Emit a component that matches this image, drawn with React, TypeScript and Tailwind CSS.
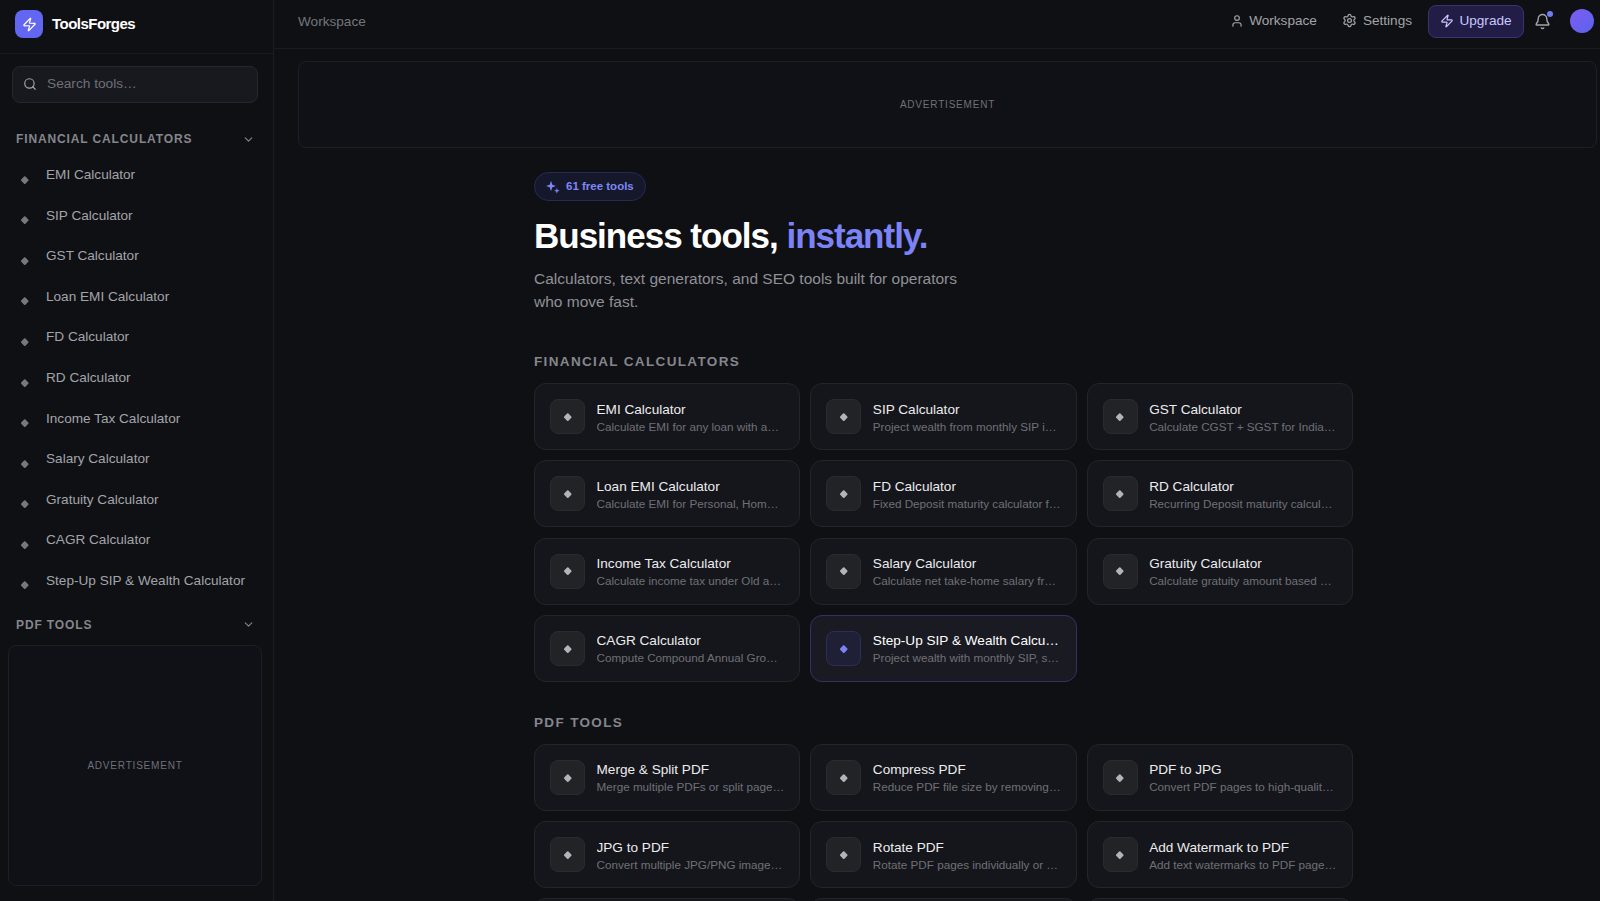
import { Zap, Search, ChevronDown, User, Settings, Bell } from "lucide-react";

const side = ["EMI Calculator","SIP Calculator","GST Calculator","Loan EMI Calculator","FD Calculator","RD Calculator","Income Tax Calculator","Salary Calculator","Gratuity Calculator","CAGR Calculator","Step-Up SIP & Wealth Calculator"];

const fin: [string,string,boolean?][] = [
 ["EMI Calculator","Calculate EMI for any loan with amortization schedule"],
 ["SIP Calculator","Project wealth from monthly SIP investments today"],
 ["GST Calculator","Calculate CGST + SGST for Indian invoices quickly"],
 ["Loan EMI Calculator","Calculate EMI for Personal, Home, and Car loans"],
 ["FD Calculator","Fixed Deposit maturity calculator for Indian banks"],
 ["RD Calculator","Recurring Deposit maturity calculator for savers"],
 ["Income Tax Calculator","Calculate income tax under Old and New regimes"],
 ["Salary Calculator","Calculate net take-home salary from your CTC"],
 ["Gratuity Calculator","Calculate gratuity amount based on your salary"],
 ["CAGR Calculator","Compute Compound Annual Growth Rate easily"],
 ["Step-Up SIP & Wealth Calculator","Project wealth with monthly SIP, step-up and more",true],
];
const pdf: [string,string,boolean?][] = [
 ["Merge & Split PDF","Merge multiple PDFs or split pages in seconds"],
 ["Compress PDF","Reduce PDF file size by removing extra data"],
 ["PDF to JPG","Convert PDF pages to high-quality JPG images"],
 ["JPG to PDF","Convert multiple JPG/PNG images into a PDF"],
 ["Rotate PDF","Rotate PDF pages individually or all at once"],
 ["Add Watermark to PDF","Add text watermarks to PDF pages in bulk"],
 ["PDF to Word","Convert PDF files to editable documents"],
 ["Word to PDF","Convert documents to PDF files"],
 ["Unlock PDF","Remove passwords from PDF files"],
];

function Diamond({ className }: { className: string }) {
  return <span className={"block w-[5.5px] h-[5.5px] rotate-45 rounded-[1px] shrink-0 " + className} />;
}

function Card({ t, d, active }: { t: string; d: string; active?: boolean }) {
  return (
    <div className={"h-[67px] rounded-xl border flex items-center pl-[15px] pr-[15px] gap-[11.5px] min-w-0 " + (active ? "border-[#2e3266] bg-[#1a1b22]" : "border-[#24252b] bg-[#15161b]")}>
      <div className={"w-[35px] h-[35px] rounded-lg border flex items-center justify-center shrink-0 " + (active ? "bg-[#1f2036] border-[#2c2e55]" : "bg-[#222327] border-[#2a2b30]")}>
        <Diamond className={active ? "bg-[#7c83f7]" : "bg-[#b4b4b8]"} />
      </div>
      <div className="min-w-0 flex-1 pt-[2px]">
        <div className={"text-[13.6px] leading-[17px] truncate font-medium " + (active ? "text-white" : "text-[#ececee]")}>{t}</div>
        <div className="text-[11.7px] leading-[17px] truncate text-[#6f7076]">{d}</div>
      </div>
    </div>
  );
}

function Section({ title, items }: { title: string; items: [string,string,boolean?][] }) {
  return (
    <section>
      <h2 className="text-[13.5px] leading-[16px] font-bold tracking-[0.1em] text-[#85868c] uppercase mb-[13px]">{title}</h2>
      <div className="grid grid-cols-3 gap-x-[10px] gap-y-[10.3px]">
        {items.map(([t,d,a]) => <Card key={t} t={t} d={d} active={a} />)}
      </div>
    </section>
  );
}

export default function App() {
  return (
    <div className="flex h-[901px] overflow-hidden bg-[#0f1014] font-['Liberation_Sans',Arial,sans-serif] antialiased">
      <aside className="w-[274px] shrink-0 border-r border-[#1c1d22] flex flex-col">
        <div className="h-[54px] shrink-0 border-b border-[#1a1b20] flex items-center gap-[9px] pl-[15px] pb-[5px]">
          <div className="w-[28px] h-[28px] rounded-lg bg-[#6366f1] flex items-center justify-center">
            <Zap size={15} className="text-white" strokeWidth={2} />
          </div>
          <span className="text-[15px] font-bold text-white tracking-[-0.035em]">ToolsForges</span>
        </div>
        <div className="pl-3 pr-[15px] pt-3">
          <div className="h-[37px] rounded-lg border border-[#26272c] bg-[#18191e] flex items-center pl-[10px] gap-[10px]">
            <Search size={14} className="text-[#a4a5aa] -mt-[1px]" />
            <span className="text-[13.7px] text-[#6f7076]">Search tools…</span>
          </div>
        </div>
        <div className="flex items-center justify-between pl-[16px] pr-[18px] mt-[28px] h-[16px]">
          <span className="text-[12px] font-bold tracking-[0.073em] text-[#85868c]">FINANCIAL CALCULATORS</span>
          <ChevronDown size={13} className="text-[#85868c]" />
        </div>
        <ul className="mt-[8px] pl-[21.5px]">
          {side.map((s) => (
            <li key={s} className="h-[40.6px] flex items-center gap-[19px]">
              <Diamond className="bg-[#77787d] mt-[8px]" />
              <span className="text-[13.6px] text-[#a3a4a9]">{s}</span>
            </li>
          ))}
        </ul>
        <div className="flex items-center justify-between pl-[16px] pr-[18px] mt-[15px] h-[16px]">
          <span className="text-[12px] font-bold tracking-[0.073em] text-[#85868c]">PDF TOOLS</span>
          <ChevronDown size={13} className="text-[#85868c]" />
        </div>
        <div className="ml-2 mr-[11px] mt-[12px] h-[241px] shrink-0 rounded-lg border border-[#1e1f25] bg-[#101116] flex items-center justify-center">
          <span className="text-[10px] tracking-[0.08em] text-[#6f7076]">ADVERTISEMENT</span>
        </div>
      </aside>
      <main className="flex-1 min-w-0 flex flex-col">
        <header className="h-[49px] shrink-0 border-b border-[#1a1b20] flex items-center pl-6 pr-[6px]">
          <span className="text-[13.6px] text-[#75767c] -mt-[4px]">Workspace</span>
          <div className="ml-auto flex items-center -mt-[6px]">
            <span className="flex items-center gap-[5px] text-[13.6px] text-[#a3a4a9]"><User size={14} />Workspace</span>
            <span className="flex items-center gap-[6px] text-[13.6px] text-[#a3a4a9] ml-[25px]"><Settings size={15} />Settings</span>
            <span className="ml-[16px] h-[33px] w-[96px] rounded-lg bg-[#221d47] border border-[#39346f] flex items-center justify-center gap-[5px] text-[13.6px] text-[#c7c8fb]"><Zap size={14} />Upgrade</span>
            <span className="relative ml-[10px] mr-[19px]">
              <Bell size={17} className="text-[#a3a4a9]" />
              <span className="absolute -top-[2px] -right-[2px] w-[6px] h-[6px] rounded-full bg-[#6d7cf7]" />
            </span>
            <span className="w-[24px] h-[24px] rounded-full bg-gradient-to-br from-[#7c5cf0] to-[#5b62ee]" />
          </div>
        </header>
        <div className="pl-6 pr-[3px] pt-3">
          <div className="h-[87px] rounded-lg border border-[#1e1f25] bg-[#101116] flex items-center justify-center">
            <span className="text-[10px] tracking-[0.08em] text-[#6f7076]">ADVERTISEMENT</span>
          </div>
        </div>
        <div className="w-[819px] ml-[260px] pt-6 shrink-0">
          <div className="inline-flex items-center gap-[6px] h-[29px] rounded-full border border-[#272a55] bg-[#15172a] px-[11px] text-[11.5px] font-bold text-[#7f86f5]">
            <svg width="14" height="14" viewBox="0 0 14 14" fill="currentColor" aria-hidden="true">
              <path d="M5 .8 6.3 4.7 10 6 6.3 7.3 5 11.2 3.7 7.3 0 6l3.7-1.3z" />
              <path d="M10.9 7.8 11.6 10.1 13.8 10.8 11.6 11.5 10.9 13.8 10.2 11.5 8 10.8 10.2 10.1z" />
            </svg>
            61 free tools
          </div>
          <h1 className="mt-[13px] text-[35px] leading-[44px] font-bold tracking-[-1px] text-white">Business tools, <span className="text-[#7c83f7]">instantly.</span></h1>
          <p className="mt-[9px] text-[15.5px] leading-[23px] text-[#8f9096] w-[450px]">Calculators, text generators, and SEO tools built for operators who move fast.</p>
          <div className="mt-[41px]"><Section title="FINANCIAL CALCULATORS" items={fin} /></div>
          <div className="mt-[33px]"><Section title="PDF TOOLS" items={pdf} /></div>
        </div>
      </main>
    </div>
  );
}
